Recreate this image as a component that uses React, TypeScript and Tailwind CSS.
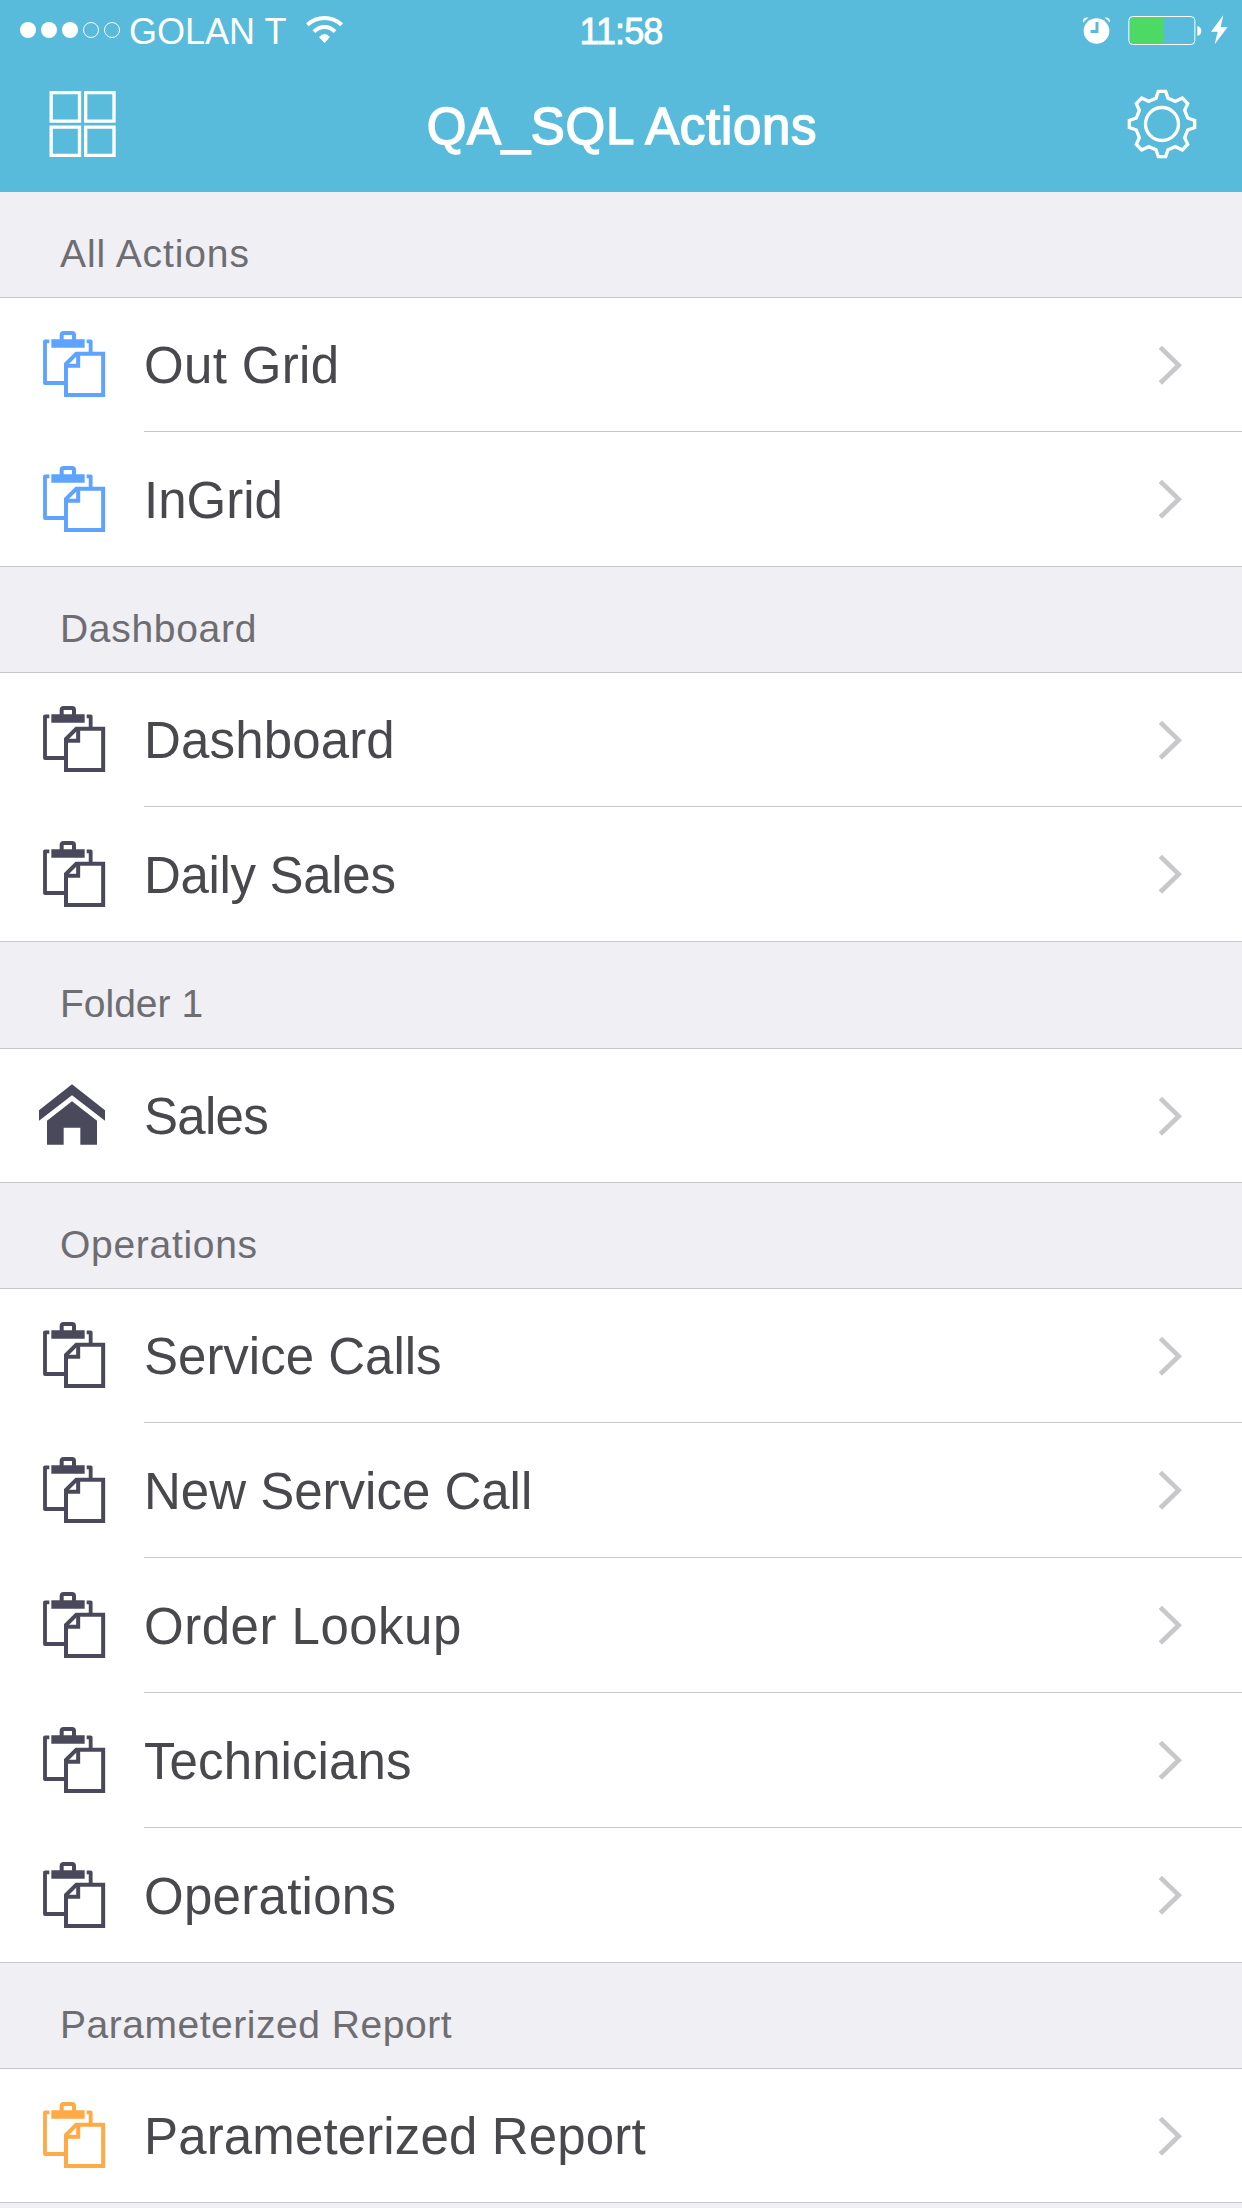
import React from "react";

type IconKind = "clipboard" | "home";
type Item = { label: string; icon?: IconKind; color?: string; tracking?: string };
type Section = { title: string; tracking?: string; height?: string; items: Item[] };

const sections: Section[] = [
  {
    title: "All Actions",
    tracking: "tracking-[0.9px]",
    items: [
      { label: "Out Grid", color: "text-[#5ea3fe]", tracking: "tracking-[0.35px]" },
      { label: "InGrid", color: "text-[#5ea3fe]" },
    ],
  },
  {
    title: "Dashboard",
    tracking: "tracking-[0.7px]",
    items: [
      { label: "Dashboard", tracking: "tracking-[0.15px]" },
      { label: "Daily Sales", tracking: "tracking-[-0.32px]" },
    ],
  },
  {
    title: "Folder 1",
    height: "h-[107px]",
    items: [{ label: "Sales", icon: "home", tracking: "tracking-[-0.7px]" }],
  },
  {
    title: "Operations",
    tracking: "tracking-[0.7px]",
    items: [
      { label: "Service Calls" },
      { label: "New Service Call" },
      { label: "Order Lookup", tracking: "tracking-[0.5px]" },
      { label: "Technicians", tracking: "tracking-[0.1px]" },
      { label: "Operations", tracking: "tracking-[0.28px]" },
    ],
  },
  {
    title: "Parameterized Report",
    tracking: "tracking-[0.53px]",
    items: [{ label: "Parameterized Report", color: "text-[#feaa46]", tracking: "tracking-[0.14px]" }],
  },
];

function ClipboardIcon() {
  return (
    <svg viewBox="60 60 204 204" className="block size-[68px]" fill="none" stroke="currentColor">
      <path d="M88 94H75V219H132" strokeWidth="11.500" strokeLinejoin="round" />
      <path d="M200 94H212V126" strokeWidth="11.500" strokeLinejoin="round" />
      <path d="M94 88H194V113H94Z" fill="currentColor" stroke="none" />
      <path d="M125 90V75Q125 69 131 69H156Q162 69 162 75V90" strokeWidth="12" />
      <path d="M138 162L169 131.500H249.500V255H138Z" strokeWidth="12" />
      <path d="M174.500 131V167.500H138" strokeWidth="12" />
    </svg>
  );
}

function HomeIcon() {
  return (
    <svg viewBox="60 60 204 204" className="block size-[68px] overflow-visible" fill="currentColor">
      <path d="M57 148L156 70L255 148V179L156 103L57 179Z" />
      <path d="M81 179L156 121L231 179V251H181V200H131V251H81Z" />
    </svg>
  );
}

function Chevron() {
  return (
    <svg viewBox="111 67 78 132" className="block h-[44px] w-[26px]" fill="none" stroke="#c7c7cc" strokeWidth="14">
      <path d="M121 80L176 133.500L121 187" />
    </svg>
  );
}

function Row({ item, first, last }: { item: Item; first: boolean; last: boolean }) {
  return (
    <li
      className={`flex pl-10 ${first ? "h-[134px]" : "h-[135px]"} ${last ? "border-b border-[#c8c7cc]" : ""}`}
    >
      <div
        className={`flex w-[104px] shrink-0 items-center ${first ? "pb-[2px]" : "pb-px"} ${
          item.color ?? "text-[#4a495b]"
        }`}
      >
        {item.icon === "home" ? <HomeIcon /> : <ClipboardIcon />}
      </div>
      <div className={`flex flex-1 items-center justify-between pr-[59px] ${last ? "" : "border-b border-[#c8c7cc]"}`}>
        <span className={`pt-[2px] text-[51px] leading-none whitespace-nowrap text-[#48484d] ${item.tracking ?? ""}`}>
          {item.label}
        </span>
        <Chevron />
      </div>
    </li>
  );
}

function Header() {
  return (
    <header className="h-[192px] bg-[#58bbdb] text-white">
      <div className="grid h-[60px] grid-cols-3 items-center">
        <div className="flex items-center pl-5">
          <svg viewBox="60 60 300 60" className="h-5 w-[100px]" fill="none" stroke="white" strokeWidth="3">
            <circle cx="84" cy="90" r="24" fill="white" stroke="none" />
            <circle cx="147" cy="90" r="24" fill="white" stroke="none" />
            <circle cx="210" cy="90" r="24" fill="white" stroke="none" />
            <circle cx="273" cy="90" r="22.500" />
            <circle cx="336" cy="90" r="22.500" />
          </svg>
          <span className="ml-[9px] pt-[3px] text-[36px] leading-none whitespace-nowrap">GOLAN T</span>
          <svg viewBox="918 45 111 90" className="ml-[20px] h-[30px] w-[37px]" fill="none" stroke="white" strokeWidth="12">
            <path d="M922 74Q945 54 973.500 54T1025 74" />
            <path d="M942 95Q956 81 973.500 81T1005 95" />
            <path d="M957 111Q973.500 93 990 111L973.500 129Z" fill="white" stroke="none" />
          </svg>
        </div>
        <span className="pt-[3px] text-center text-[36px] leading-none tracking-[-0.9px] [-webkit-text-stroke:0.8px_white]">
          11:58
        </span>
        <div className="flex items-center justify-end pr-[14px]">
          <svg viewBox="58 48 88 87" className="h-[29px] w-[29px]">
            <circle cx="102" cy="93" r="39" fill="white" />
            <path d="M61 68Q58 51 78 52Q70 58 61 68ZM143 68Q146 51 126 52Q134 58 143 68Z" fill="white" />
            <path d="M103.500 66V94.500H84" fill="none" stroke="#58bbdb" strokeWidth="9" />
          </svg>
          <svg viewBox="197 45 222 93" className="ml-[17px] h-[31px] w-[74px]">
            <rect x="199.500" y="49.500" width="198" height="84" rx="12" fill="none" stroke="white" strokeWidth="3" />
            <path d="M304 54H210Q203 54 203 61V123Q203 130 210 130H304Z" fill="#4cd964" />
            <path d="M405 78Q417 81 417 93T405 108Z" fill="white" />
          </svg>
          <svg viewBox="446 45 51 90" className="ml-[9px] h-[30px] w-[17px]">
            <path d="M483 46L446 95H466L457 133L496 81H475Z" fill="white" />
          </svg>
        </div>
      </div>
      <div className="flex h-[128px] items-center justify-between pr-[45px] pl-[49px]">
        <svg viewBox="147 270 204 204" className="size-[68px]" fill="none" stroke="white" strokeWidth="10">
          <path d="M153.500 278H238.500V363.500H153.500ZM257 278H342V363.500H257ZM153.500 381.500H238.500V466H153.500ZM257 381.500H342V466H257Z" />
        </svg>
        <h1 className="pt-[4px] text-[51px] leading-none tracking-[0.7px] [-webkit-text-stroke:1.500px_white]">
          QA_SQL Actions
        </h1>
        <svg viewBox="-105 -105 210 210" className="size-[70px]" fill="none" stroke="white" strokeWidth="10">
          <circle r="49.500" />
          <path d="M-11-98H11L18-77L40-68L61-78L77-61L68-41L77-18L98-11V11L77 18L68 41L77 61L61 78L40 68L18 77L11 98H-11L-18 77L-40 68L-61 78L-77 61L-68 41L-77 18L-98 11V-11L-77-18L-68-41L-77-61L-61-78L-40-68L-18-77Z" />
        </svg>
      </div>
    </header>
  );
}

export default function App() {
  return (
    <div className="h-[2208px] w-[1242px] overflow-hidden bg-[#efeff4] font-['Liberation_Sans',Arial,sans-serif]">
      <Header />
      <main>
        {sections.map((section) => (
          <section key={section.title}>
            <h2
              className={`flex items-center border-b border-[#c8c7cc] pt-[17px] pl-[60px] text-[39px] leading-none text-[#6d6d72] ${
                section.height ?? "h-[106px]"
              } ${section.tracking ?? ""}`}
            >
              {section.title}
            </h2>
            <ul className="bg-white">
              {section.items.map((item, j) => (
                <Row key={item.label} item={item} first={j === 0} last={j === section.items.length - 1} />
              ))}
            </ul>
          </section>
        ))}
      </main>
    </div>
  );
}
